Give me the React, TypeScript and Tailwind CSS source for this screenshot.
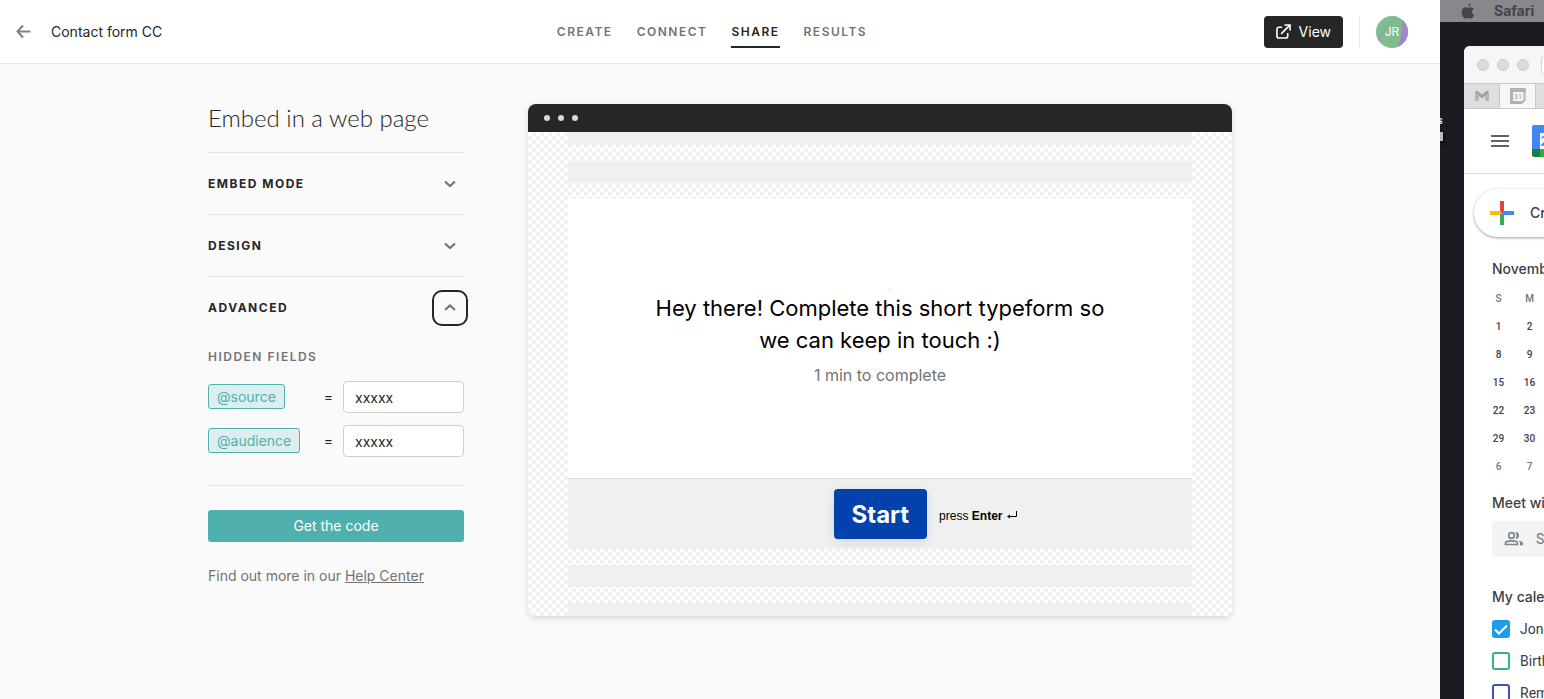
import { useState, type ReactNode } from 'react';

const tabs = ["Create", "Connect", "Share", "Results"];

const weeks = [
    [1, 2],
    [8, 9],
    [15, 16],
    [22, 23],
    [29, 30],
    [6, 7],
];

const calendars = [
    { name: "Jon", color: "border-[#1e9be9] checked:bg-[#1e9be9]", on: true },
    { name: "Birthdays", color: "border-[#33b679] checked:bg-[#33b679]", on: false },
    { name: "Reminders", color: "border-[#3f51b5] checked:bg-[#3f51b5]", on: false },
];

function Chevron({ up = false } : {up? : boolean}) {
    return (
        <svg className="size-4" viewBox="0 0 16 16" fill="none" stroke="#737373" strokeWidth="2.2">
            <path d={up ? "M3 10 8 5.5 13 10" : "M3 5.5 8 10 13 5.5"} />
        </svg>
    )
}

function Header() {
    return (
        <header className="grid h-16 shrink-0 grid-cols-[1fr_auto_1fr] items-center border-b border-[#e8e8e8] bg-white pl-4 pr-8">
            <div className="flex items-center gap-5">
                <button aria-label="Back">
                    <svg className="size-[15px]" viewBox="0 0 15 15" fill="none" stroke="#808080" strokeWidth="2">
                        <path d="M7 1.5 1.5 7.5 7 13.5M1.5 7.5H14.5" />
                    </svg>
                </button>
                <p className="text-sm text-[#262626]">Contact form CC</p>
            </div>
            <nav className="flex gap-6 text-xs font-semibold uppercase tracking-[1.5px]">
                {tabs.map((tab) => (
                    <a
                        key={tab}
                        href="#"
                        className={tab === "Share"
                            ? "border-b-2 border-[#262626] pt-2 pb-1.5 leading-4 text-[#262626]"
                            : "border-b-2 border-transparent pt-2 pb-1.5 leading-4 text-[#737373]"}
                    >{tab}</a>
                ))}
            </nav>
            <div className="flex items-center justify-end">
                <button className="flex h-8 items-center gap-2 rounded bg-[#262626] px-3 text-sm text-white">
                    <svg className="size-[15px]" viewBox="0 0 16 16" fill="none" stroke="#fff" strokeWidth="1.7">
                        <path d="M6.5 3.5H3.2Q1 3.5 1 5.7V12.8Q1 15 3.2 15H10.3Q12.5 15 12.5 12.8V9.5" />
                        <path d="M5.5 10.5 14.5 1.5M9 1H15V7" />
                    </svg>
                    View
                </button>
                <div className="mx-4 h-8 w-px bg-[#e8e8e8]" />
                <div className="relative flex size-8 items-center justify-center overflow-hidden rounded-full bg-[#7fbc8f] text-xs text-white">
                    <svg className="absolute inset-0 size-8" viewBox="0 0 32 32" fill="none">
                        <path d="M26.5 4C24.500 12 27.500 21 20.500 32H32V4Z" fill="#a387c9" />
                        <path d="M1 24C9 18 11 5 21 0" stroke="#a387c9" />
                    </svg>
                    <span className="relative">JR</span>
                </div>
            </div>
        </header>
    )
}

function Section({ title, open = false } : {title : string, open? : boolean}) {
    return (
        <div className="flex h-[62px] items-center justify-between border-t border-[#e5e5e5]">
            <h2 className="text-xs font-bold uppercase tracking-[1.5px] text-[#262626]">{title}</h2>
            <button
                aria-label={title}
                aria-expanded={open}
                className={open
                    ? "flex size-7 items-center justify-center rounded-md outline-2 outline-offset-2 outline-[#262626]"
                    : "flex size-7 items-center justify-center rounded-md"}
            >
                <Chevron up={open} />
            </button>
        </div>
    )
}

function HiddenField({ name } : {name : string}) {
    const [value, setValue] = useState<string>("xxxxx");

    return (
        <div className="flex h-8 items-center">
            <div className="flex flex-1 pb-px">
                <label htmlFor={name} className="rounded-[3px] border border-[#4fb0ae] bg-[#dcefee] px-2 text-sm leading-[23px] text-[#4fb0ae]">@{name}</label>
            </div>
            <span className="mr-2.5 text-sm text-[#262626]">=</span>
            <input
                id={name}
                value={value}
                onChange={(e) => setValue(e.target.value)}
                className="h-8 w-[121px] rounded border border-[#cfcfcf] bg-white px-[11px] text-sm text-[#262626]"
            />
        </div>
    )
}

function Settings() {
    return (
        <aside className="w-64 shrink-0">
            <h1 className="mb-5 font-['Lato',sans-serif] text-2xl leading-7 font-light text-[#262626]">Embed in a web page</h1>
            <Section title="Embed mode" />
            <Section title="Design" />
            <Section title="Advanced" open />
            <h3 className="mt-[11px] mb-4 text-xs leading-4 font-semibold uppercase tracking-[1.5px] text-[#737373]">Hidden fields</h3>
            <div className="flex flex-col gap-3 border-b border-[#e5e5e5] pb-7">
                <HiddenField name="source" />
                <HiddenField name="audience" />
            </div>
            <button className="mt-6 h-8 w-full rounded-[3px] bg-[#4fb0ae] text-sm text-white">Get the code</button>
            <p className="mt-6 text-sm text-[#737373]">Find out more in our <a href="#" className="underline">Help Center</a></p>
        </aside>
    )
}

function Preview() {
    return (
        <section className="flex h-[512px] min-w-0 flex-1 flex-col overflow-hidden rounded-lg shadow-[0_2px_6px_rgba(0,0,0,0.15)]">
            <div className="flex h-7 shrink-0 items-center gap-2 bg-[#262626] px-4">
                <i className="size-1.5 rounded-full bg-[#d9d9d9]" />
                <i className="size-1.5 rounded-full bg-[#d9d9d9]" />
                <i className="size-1.5 rounded-full bg-[#d9d9d9]" />
            </div>
            <div className="flex flex-1 flex-col gap-4 bg-white bg-[conic-gradient(#f1f1f1_25%,#fff_0_50%,#f1f1f1_0_75%,#fff_0)] bg-size-[8px_8px] px-10">
                <div className="h-[13px] bg-[#f0f0f0]" />
                <div className="h-[22px] bg-[#f0f0f0]" />
                <div className="flex flex-1 flex-col bg-white">
                    <div className="flex flex-1 flex-col items-center justify-center gap-2 pt-px text-center">
                        <p className="max-w-[470px] text-[22px] leading-8 text-black">Hey there! Complete this short typeform so we can keep in touch :)</p>
                        <p className="text-base leading-[22px] text-[#737373]">1 min to complete</p>
                    </div>
                    <div className="flex h-[71px] items-center justify-center gap-3 border-t border-[#e0e0e0] bg-[#f0f0f0] pl-[92px]">
                        <button className="h-[50px] rounded bg-[#0142ac] px-[18px] pt-0.5 text-2xl font-bold text-white shadow-[0_3px_12px_rgba(0,0,0,0.1)]">Start</button>
                        <p className="flex items-center gap-1 pt-1 font-['Liberation_Sans',sans-serif] text-xs text-black">
                            <span>press <b>Enter</b></span>
                            <svg className="size-3" viewBox="0 0 12 12" fill="none" stroke="#000">
                                <path d="M10.5 1V6.500H2" />
                                <path d="M1 6.500 4 4.500V8.500Z" fill="#000" stroke="none" />
                            </svg>
                        </p>
                    </div>
                </div>
                <div className="h-[22px] bg-[#f0f0f0]" />
                <div className="h-[13px] bg-[#f0f0f0]" />
            </div>
        </section>
    )
}

function Label({ children } : {children : ReactNode}) {
    return <p className="pl-7 font-['Inter',sans-serif] text-sm leading-5 font-medium text-[#3c4043]">{children}</p>
}

function CalendarWindow() {
    return (
        <div className="mt-6 ml-6 flex-1 overflow-hidden rounded-tl-md bg-white whitespace-nowrap">
            <div className="flex h-[37px] items-center gap-2 bg-[#f6f6f6] pl-[13px]">
                <i className="size-3 shrink-0 rounded-full border border-[#cbcbcb] bg-[#dcdcdc]" />
                <i className="size-3 shrink-0 rounded-full border border-[#cbcbcb] bg-[#dcdcdc]" />
                <i className="size-3 shrink-0 rounded-full border border-[#cbcbcb] bg-[#dcdcdc]" />
                <i className="ml-1 h-[22px] w-8 shrink-0 rounded-md border border-[#d2d2d2] bg-white" />
            </div>
            <div className="flex h-[26px] border-y border-[#c8c8c8] bg-[#dedede]">
                <div className="flex w-[35px] items-center justify-center">
                    <svg className="h-3 w-4" viewBox="0 0 16 12">
                        <path d="M1 2V11H4.500V5.500L8 8.500 11.500 5.500V11H15V2L13 0.500 8 4.500 3 0.500Z" fill="#a2a2a2" />
                        <path d="M1 2 4.500 5V11H1ZM15 2 11.500 5V11H15Z" fill="#b4b4b4" />
                    </svg>
                </div>
                <div className="flex w-[37px] items-center justify-center border-x border-[#c8c8c8] bg-[#f6f6f6]">
                    <svg className="size-4" viewBox="0 0 16 16">
                        <path d="M1 0H15L16 1V12L12 16H1L0 15V1Z" fill="#b0b0b0" />
                        <path d="M13 4H16V12H13Z" fill="#c8c8c8" />
                        <rect x="3" y="4" width="10" height="9" fill="#f4f4f4" />
                        <text x="8" y="11" fontSize="7" textAnchor="middle" fill="#a0a0a0">31</text>
                    </svg>
                </div>
            </div>
            <div className="flex h-[65px] items-center gap-[23px] border-b border-[#dadce0] pl-[27px]">
                <button aria-label="Main menu" className="flex w-[18px] shrink-0 flex-col gap-[3px]">
                    <i className="h-0.5 bg-[#5f6368]" />
                    <i className="h-0.5 bg-[#5f6368]" />
                    <i className="h-0.5 bg-[#5f6368]" />
                </button>
                <svg className="h-8 w-8 shrink-0" viewBox="0 0 32 32">
                    <path d="M2 0H32V24H0V2Q0 0 2 0Z" fill="#4285f4" />
                    <path d="M0 24H8V32H2Q0 32 0 30Z" fill="#188038" />
                    <path d="M8 24H32V32H8Z" fill="#34a853" />
                    <path d="M8 8H32V24H8Z" fill="#fff" />
                    <path d="M10 13.500Q10.500 11.500 12.500 11.500 15 11.500 15 14 15 15.500 10 20H15" fill="none" stroke="#4285f4" strokeWidth="1.5" />
                </svg>
            </div>
            <button className="mt-[15px] ml-2.5 flex h-12 w-32 items-center gap-4 rounded-full bg-white pl-4 font-['Inter',sans-serif] text-sm font-medium text-[#3c4043] shadow-[0_1px_3px_rgba(60,64,67,0.5)]">
                <svg className="size-6 shrink-0" viewBox="0 0 24 24">
                    <path d="M10 0H14V12L10 14Z" fill="#ea4335" />
                    <path d="M0 10H10L12 12 10 14H0Z" fill="#fbbc04" />
                    <path d="M14 10H24V14H10Z" fill="#4285f4" />
                    <path d="M10 14H14V24H10Z" fill="#34a853" />
                </svg>
                Create
            </button>
            <div className="mt-[22px]"><Label>November</Label></div>
            <table className="mt-[5px] ml-[19px] w-[62px] table-fixed text-center text-[10px] font-medium text-[#3c4043]">
                <thead>
                    <tr className="h-7 text-[#70757a]">
                        <th className="font-medium">S</th>
                        <th className="font-medium">M</th>
                    </tr>
                </thead>
                <tbody>
                    {weeks.map((week, i) => (
                        <tr key={i} className={i === 5 ? "h-7 text-[#70757a]" : "h-7"}>
                            {week.map((day) => <td key={day}>{day}</td>)}
                        </tr>
                    ))}
                </tbody>
            </table>
            <div className="mt-[13px]"><Label>Meet with</Label></div>
            <div className="mt-2 ml-7 flex h-9 w-40 items-center gap-3 rounded bg-[#f1f3f4] pl-3 text-sm text-[#70757a]">
                <svg className="size-5 shrink-0" viewBox="0 0 20 20" fill="none" stroke="#80868b" strokeWidth="1.700">
                    <circle cx="7.500" cy="6.500" r="2.800" />
                    <path d="M1.500 15.500V14.200Q1.500 11.800 7.500 11.800T13.500 14.200V15.500Z" />
                    <path d="M11.500 3Q15 3.200 15 6.500T11.500 10Q13.500 6.500 11.500 3ZM14.500 11.500Q19 12.500 19 14.200V16.300H16V14.200Q16 12.800 14.500 11.500Z" fill="#80868b" stroke="none" />
                </svg>
                Search
            </div>
            <div className="mt-[30px] mb-1.5"><Label>My calendars</Label></div>
            {calendars.map((calendar) => (
                <label key={calendar.name} className="flex h-8 items-center gap-2.5 pl-7 text-sm text-[#3c4043]">
                    <span className="relative size-[18px] shrink-0">
                        <input type="checkbox" defaultChecked={calendar.on} className={`peer block size-[18px] appearance-none rounded-[3px] border-2 ${calendar.color}`} />
                        <svg className="pointer-events-none absolute inset-0 hidden size-[18px] peer-checked:block" viewBox="0 0 18 18" fill="none" stroke="#fff" strokeWidth="2">
                            <path d="M3 9.500 7 13.500 15 5.500" />
                        </svg>
                    </span>
                    {calendar.name}
                </label>
            ))}
        </div>
    )
}

function Desktop() {
    return (
        <div className="relative flex w-[104px] shrink-0 flex-col overflow-hidden bg-[#1c1b21] font-['Roboto',sans-serif]">
            <div className="flex h-[22px] shrink-0 items-center gap-[19px] bg-[#88878c] pl-[21px] font-['Inter',sans-serif] text-sm font-bold text-[#454449]">
                <svg className="h-4 w-3.5 shrink-0" viewBox="0 0 14 16" fill="#454449">
                    <path d="M9.700 0Q10 2.300 7.300 3.900 6.700 1.400 9.700 0ZM7.100 5Q8 4.300 9.600 4.200 11.700 4.200 12.800 5.900 11 7 11 8.900 11 11.200 13.200 12.100 11.500 15.800 9.900 15.800 8.200 15 7.100 15.100 6 15.200 4.600 15.800C2.800 15.800 0.500 12 0.700 8.800 0.900 5.800 2.600 4.200 4.500 4.200 5.800 4.300 6.500 5 7.100 5Z" />
                </svg>
                Safari
            </div>
            {/* edge of a desktop icon, with its label */}
            <span className="absolute top-[115px] -left-[3px] text-[11px] leading-3 font-medium text-white">s</span>
            <i className="absolute top-[132px] left-0 h-[9px] w-[3px] bg-[#bdbdbd] shadow-[1px_2px_3px_#000]" />
            <CalendarWindow />
        </div>
    )
}

export default function App() {
    return (
        <div className="flex h-screen overflow-hidden font-['Inter',sans-serif]">
            <div className="flex min-w-0 flex-1 flex-col bg-[#fafafa]">
                <Header />
                <main className="mx-auto flex w-full max-w-[1024px] items-start gap-16 pt-10">
                    <Settings />
                    <Preview />
                </main>
            </div>
            <Desktop />
        </div>
    )
}
